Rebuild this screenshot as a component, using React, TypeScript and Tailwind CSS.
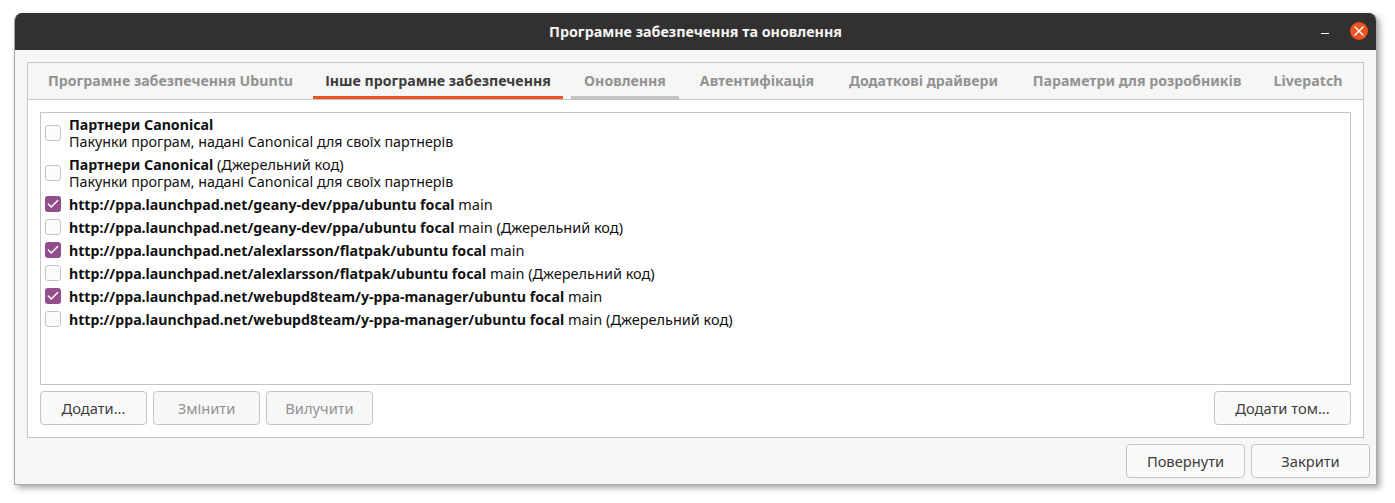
import { Check, X } from "lucide-react";

interface Source {
    bold: string;
    rest?: string;
    note?: string;
    checked?: boolean;
}

const tabs = [
    { label: "Програмне забезпечення Ubuntu", width: "w-[269px]" },
    { label: "Інше програмне забезпечення", width: "w-[250px]", active: true },
    { label: "Оновлення", width: "w-[108px]", hover: true },
    { label: "Автентифікація", width: "w-[140px]" },
    { label: "Додаткові драйвери", width: "w-[177px]" },
    { label: "Параметри для розробників", width: "w-[234px]" },
    { label: "Livepatch", width: "w-[92px]" },
];

const note = "Пакунки програм, надані Canonical для своїх партнерів";

const sources: Source[] = [
    { bold: "Партнери Canonical", note },
    { bold: "Партнери Canonical", rest: " (Джерельний код)", note },
    { bold: "http://ppa.launchpad.net/geany-dev/ppa/ubuntu focal", rest: " main", checked: true },
    { bold: "http://ppa.launchpad.net/geany-dev/ppa/ubuntu focal", rest: " main (Джерельний код)" },
    { bold: "http://ppa.launchpad.net/alexlarsson/flatpak/ubuntu focal", rest: " main", checked: true },
    { bold: "http://ppa.launchpad.net/alexlarsson/flatpak/ubuntu focal", rest: " main (Джерельний код)" },
    { bold: "http://ppa.launchpad.net/webupd8team/y-ppa-manager/ubuntu focal", rest: " main", checked: true },
    { bold: "http://ppa.launchpad.net/webupd8team/y-ppa-manager/ubuntu focal", rest: " main (Джерельний код)" },
];

const Button = ({ label, width, disabled }: { label: string; width: string; disabled?: boolean }) => (
    <button
        className={`${width} h-[34px] rounded-[4px] border border-[#c4c4c4] text-[14.7px] ${
            disabled ? "bg-[#f7f7f7] text-[#929292]" : "bg-[#fafafa] text-[#3d3d3d]"
        }`}
    >
        {label}
    </button>
);

const SourceRow = ({ source }: { source: Source }) => (
    <div className={`flex items-center gap-2 pl-1 ${source.note ? "h-10" : "h-[23px]"}`}>
        {source.checked ? (
            <span className="mb-px flex size-4 items-center justify-center rounded-[3px] bg-[#924d8b]">
                <Check color="white" size={14} strokeWidth={2.5} />
            </span>
        ) : (
            <span className={`size-4 rounded-[3px] border border-[#c4c4c4] bg-[#fbfbfb] ${source.note ? "" : "mb-px"}`} />
        )}
        <div className="text-[14.5px] leading-[17px] text-[#111111]">
            <div>
                <span className="text-[14.18px] font-bold">{source.bold}</span>
                {source.rest}
            </div>
            {source.note && <div className="text-[14.28px]">{source.note}</div>}
        </div>
    </div>
);

export default function App() {
    return (
        <div className="h-[503px] bg-white pt-[13px] pl-[14px] font-['Noto_Sans',sans-serif]">
            <div className="flex h-[472px] w-[1363px] flex-col overflow-hidden rounded-t-[8px] border-x border-b border-[#a8a8a8] bg-[#f6f6f6] shadow-[3px_3px_6px_rgba(0,0,0,0.35)]">
                {/* title bar */}
                <div className="relative flex h-[37px] shrink-0 items-center justify-center bg-[#323030]">
                    <span className="text-[14.3px] font-bold text-[#f5f5f5]">Програмне забезпечення та оновлення</span>
                    <span className="absolute right-[47px] top-[20px] h-px w-2 bg-white" />
                    <span className="absolute right-[8px] top-[9px] flex size-[18px] items-center justify-center rounded-full bg-[#e95420]">
                        <X color="white" size={16} />
                    </span>
                </div>

                <div className="flex flex-1 flex-col pl-[12px] pr-[6px] pt-[12px]">
                    {/* notebook */}
                    <div className="mr-[6px] h-[376px] border border-[#c4c4c4] bg-white">
                        <div className="flex h-[37px] border-b border-[#c4c4c4] bg-[#f6f6f6] pl-2">
                            {tabs.map((tab) => (
                                <div
                                    key={tab.label}
                                    className={`${tab.width} mr-2 flex h-[36px] shrink-0 items-center justify-center border-b-[3px] pt-[2px] text-[14.18px] font-bold ${
                                        tab.active
                                            ? "border-[#e95420] text-[#3d3d3d]"
                                            : tab.hover
                                            ? "border-[#c4c4c4] text-[#929292]"
                                            : "border-transparent text-[#929292]"
                                    }`}
                                >
                                    {tab.label}
                                </div>
                            ))}
                        </div>
                        <div className="px-3 pt-3">
                            <div className="h-[273px] border border-[#c4c4c4] bg-white">
                                {sources.map((source, i) => (
                                    <SourceRow key={i} source={source} />
                                ))}
                            </div>
                            <div className="mt-[6px] flex gap-[6px]">
                                <Button label="Додати..." width="w-[107px]" />
                                <Button label="Змінити" width="w-[107px]" disabled />
                                <Button label="Вилучити" width="w-[107px]" disabled />
                                <div className="flex-1" />
                                <Button label="Додати том..." width="w-[137px]" />
                            </div>
                        </div>
                    </div>

                    <div className="mt-[6px] flex justify-end gap-[6px]">
                        <Button label="Повернути" width="w-[119px]" />
                        <Button label="Закрити" width="w-[119px]" />
                    </div>
                </div>
            </div>
        </div>
    );
}
